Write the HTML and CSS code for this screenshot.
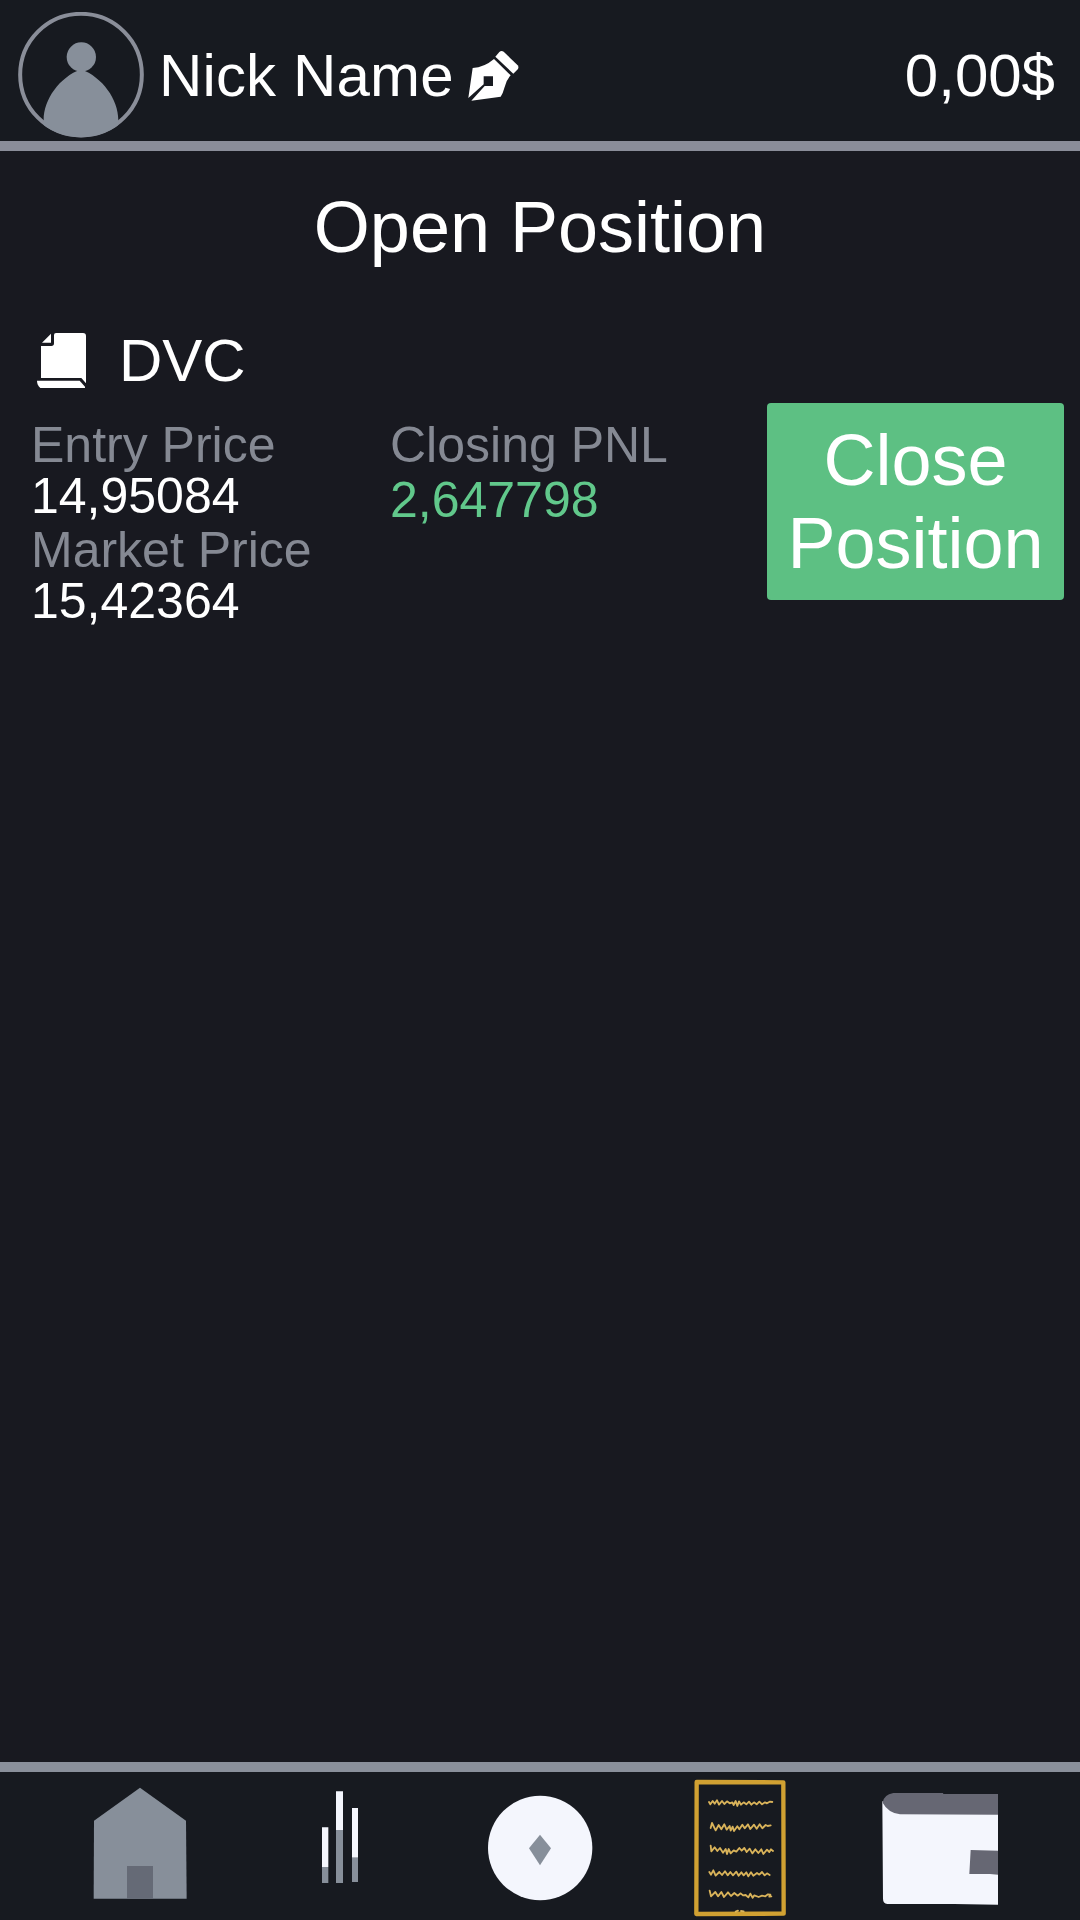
FILE: index.html
```html
<!DOCTYPE html>
<html lang="en">
<head>
<meta charset="utf-8">
<title>Open Position</title>
<link rel="stylesheet" href="styles.css">
</head>
<body>
<div class="app">
  <header class="topbar">
    <svg class="avatar" viewBox="54 36 378 378" aria-hidden="true">
      <defs><clipPath id="ring"><circle cx="243" cy="224" r="188"/></clipPath></defs>
      <circle class="ring" cx="243" cy="224" r="182.500"/>
      <circle class="grey" cx="244" cy="171" r="44"/>
      <path class="grey" clip-path="url(#ring)" d="M243 208C178 232 130 300 131 362V420H355V362C356 300 308 232 243 208Z"/>
    </svg>
    <span class="nick">Nick Name</span>
    <svg class="pen" viewBox="500 150 156 156" aria-hidden="true">
      <path d="M585 170L597 156Q603 151 610 155L652 196Q656 201 653 207L639 221Z"/>
      <path fill-rule="evenodd" d="M581 177L631 226Q617 241 612 264Q608 280 601 290L513 302L553 258H578V229H550V253L504 294L517 204Q552 202 581 177Z"/>
    </svg>
    <span class="balance">0,00$</span>
  </header>
  <main class="content">
    <h1 class="title">Open Position</h1>
    <div class="asset">
      <svg class="doc" viewBox="108 66 153 171" aria-hidden="true">
        <path d="M126 98L153 71V98Z"/>
        <path d="M168 69H249Q258 69 258 78V220L244 204H123V108H154Q162 108 162 100V75Q162 69 168 69Z"/>
        <path d="M111 212H239L255 230V234H121Q111 225 111 212Z"/>
      </svg>
      <span class="symbol">DVC</span>
    </div>
    <section class="position">
      <div class="prices">
        <div class="label">Entry Price</div>
        <div class="value">14,95084</div>
        <div class="label">Market Price</div>
        <div class="value">15,42364</div>
      </div>
      <div class="pnl">
        <div class="label">Closing PNL</div>
        <div class="value profit">2,647798</div>
      </div>
      <button class="close" type="button">Close<br>Position</button>
    </section>
  </main>
  <nav class="tabs">
    <svg class="tab" viewBox="-60 66 600 444" aria-label="Home">
      <path class="grey" d="M240 113L378 212L380 446H101L102 212Z"/>
      <rect class="door" x="201" y="348" width="78" height="98"/>
    </svg>
    <svg class="tab" viewBox="540 66 600 444" aria-label="Markets">
      <path class="pale" d="M786 232H805V351H786ZM828 124H849V240H828ZM876 174H894V323H876Z"/>
      <path class="grey" d="M786 351H805V399H786ZM828 240H849V399H828ZM876 323H894V396H876Z"/>
    </svg>
    <svg class="tab" viewBox="-60 66 600 444" aria-label="Trade">
      <circle class="pale" cx="240.500" cy="294" r="156.500"/>
      <path class="grey" d="M240 254L273 295L240 346L207 295Z"/>
    </svg>
    <svg class="tab" viewBox="-90 66 600 444" aria-label="Orders">
      <path class="frame" d="M80 96L340 97L341 491L79 492Z"/>
      <g class="scribble">
        <path d="M117 156L121 163L128 153L134 161L141 151L147 164L156 153L163 162L171 154L179 160L187 157L191 165L197 153L202 168L207 154L213 164L221 157L229 163L237 155L244 164L252 157L260 163L268 155L276 163L285 157L291 160L299 155L307 156"/>
        <path d="M122 234L126 219L137 241L146 225L154 238L163 223L170 239L179 228L182 242L188 230L192 243L202 229L208 238L217 224L224 235L234 223L241 237L252 224L260 236L269 223L277 235L287 225L293 228L302 226"/>
        <path d="M122 287L124 304L134 292L142 303L150 294L159 308L167 297L171 312L176 297L182 310L191 301L199 305L208 294L215 302L223 294L230 306L239 296L247 310L256 298L265 309L274 298L280 312L291 299L298 306L303 298L309 303"/>
        <path d="M118 366L123 374L130 361L137 377L148 366L156 375L165 364L173 376L181 366L189 376L199 365L206 377L214 367L221 376L229 367L235 379L243 367L250 377L261 369L268 374L276 366L284 376L291 370L299 375"/>
        <path d="M119 422L123 439L136 426L144 439L154 426L162 441L174 427L183 438L193 429L203 437L212 430L219 436L227 435L235 442L241 431L248 443L253 436L266 441L276 437L286 439L294 433L301 434L298 440L304 439"/>
        <path d="M197 485L204 482M213 483L221 484"/>
      </g>
    </svg>
    <svg class="tab" viewBox="-30 66 600 444" aria-label="Wallet">
      <path class="pale" d="M97 154L180 180H444V464L312 462H112Q99 460 99 446Z"/>
      <path class="flap" d="M130 129H279L280 132H444V194L150 193Q114 188 98 158Q101 134 130 129ZM362 300L444 302V374L420 372H358Z"/>
    </svg>
  </nav>
</div>
</body>
</html>
```

FILE: styles.css
```css
* {
  box-sizing: border-box;
}

body {
  margin: 0;
  background: #17191f;
  color: #fff;
  font-family: "Liberation Sans", Arial, sans-serif;
}

.app {
  display: flex;
  flex-direction: column;
  width: 1080px;
  height: 1920px;
}

.topbar {
  display: flex;
  align-items: flex-start;
  height: 151px;
  padding: 12px 25px 0 18px;
  border-bottom: 10px solid #8a8d99;
  background: #171a20;
  font-size: 60px;
  line-height: 70px;
}

.avatar {
  width: 126px;
  height: 126px;
}

.ring {
  fill: none;
  stroke: #8a8e99;
  stroke-width: 12;
}

.grey {
  fill: #878f9a;
}

.nick {
  margin: 29px 0 0 15px;
  letter-spacing: 0.15px;
}

.pen {
  width: 52px;
  height: 52px;
  margin: 38px 0 0 13px;
  fill: #fff;
}

.balance {
  margin: 29px 0 0 auto;
}

.content {
  flex: 1;
  background: #181920;
}

.title {
  margin: 0;
  padding-top: 35px;
  font-size: 72px;
  font-weight: 400;
  line-height: 83px;
  text-align: center;
}

.asset {
  display: flex;
  gap: 32px;
  margin: 57px 0 0 36px;
  font-size: 60px;
  line-height: 70px;
}

.doc {
  width: 51px;
  height: 57px;
  margin-top: 6px;
  fill: #fff;
}

.position {
  display: grid;
  grid-template-columns: 359px 377px 297px;
  align-items: start;
  margin: 7px 0 0 31px;
  font-size: 50px;
}

.prices,
.pnl {
  padding-top: 13px;
}

.label {
  height: 51px;
  color: #858993;
  line-height: 58px;
}

.value {
  height: 54px;
  line-height: 58px;
}

.profit {
  margin-top: 4px;
  color: #61c88b;
}

.close {
  height: 197px;
  padding: 0;
  border: 0;
  border-radius: 4px;
  background: #5dc083;
  color: #fff;
  font: 72px/83px "Liberation Sans", Arial, sans-serif;
}

.tabs {
  display: flex;
  height: 158px;
  padding: 0 40px;
  border-top: 10px solid #8a909b;
  background: #171a20;
}

.tab {
  width: 200px;
  height: 148px;
}

.pale {
  fill: #f4f6fd;
}

.door {
  fill: #656a76;
}

.flap {
  fill: #666773;
}

.frame {
  fill: none;
  stroke: #d1a132;
  stroke-width: 13;
  stroke-linejoin: round;
}

.scribble {
  fill: none;
  stroke: #d9b35a;
  stroke-width: 5.5;
  stroke-linecap: round;
  stroke-linejoin: round;
}
```
